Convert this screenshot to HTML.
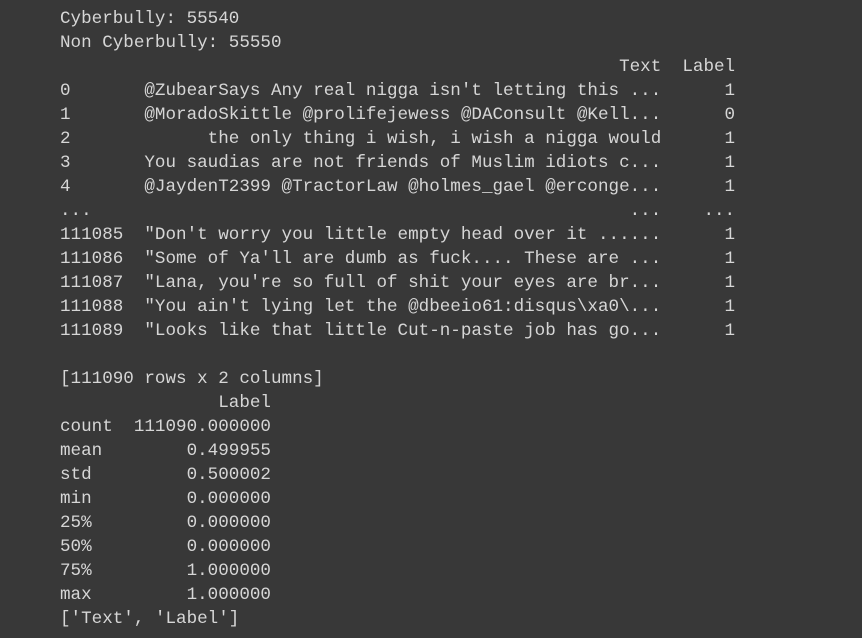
<!DOCTYPE html>
<html><head><meta charset="utf-8"><style>
html,body{margin:0;padding:0;background:#383838;width:862px;height:638px;overflow:hidden}
pre{position:absolute;left:60px;top:7px;margin:0;font-family:"Liberation Mono",monospace;font-size:17.58px;line-height:24px;color:#d6d6d6}
</style></head><body><pre>Cyberbully: 55540
Non Cyberbully: 55550
                                                     Text  Label
0       @ZubearSays Any real nigga isn't letting this ...      1
1       @MoradoSkittle @prolifejewess @DAConsult @Kell...      0
2             the only thing i wish, i wish a nigga would      1
3       You saudias are not friends of Muslim idiots c...      1
4       @JaydenT2399 @TractorLaw @holmes_gael @erconge...      1
...                                                   ...    ...
111085  "Don't worry you little empty head over it ......      1
111086  "Some of Ya'll are dumb as fuck.... These are ...      1
111087  "Lana, you're so full of shit your eyes are br...      1
111088  "You ain't lying let the @dbeeio61:disqus\xa0\...      1
111089  "Looks like that little Cut-n-paste job has go...      1

[111090 rows x 2 columns]
               Label
count  111090.000000
mean        0.499955
std         0.500002
min         0.000000
25%         0.000000
50%         0.000000
75%         1.000000
max         1.000000
['Text', 'Label']</pre></body></html>
